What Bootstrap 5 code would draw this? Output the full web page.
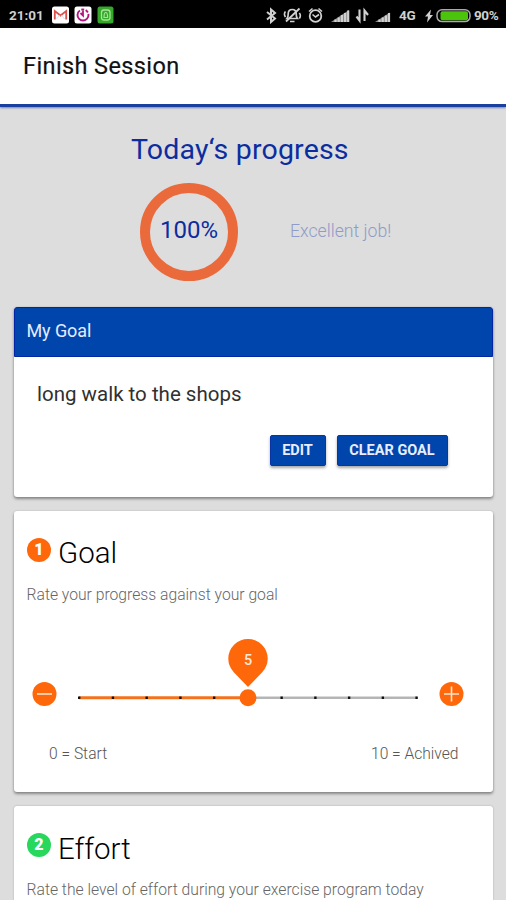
<!DOCTYPE html>
<html lang="en">
<head>
<meta charset="utf-8">
<meta name="viewport" content="width=device-width, initial-scale=1">
<title>Finish Session</title>
<link href="https://cdn.jsdelivr.net/npm/bootstrap@5.3.0/dist/css/bootstrap.min.css" rel="stylesheet">
<style>
  body { background: #dddddd; font-family: Roboto, "Liberation Sans", sans-serif; color: #000; }
  .statusbar { height: 28px; background: #000; color: #d0d0d0; font-size: 13.5px; font-weight: 700; line-height: 28px; padding: 1px 7px 0 9px; }
  .statusbar svg { display: block; flex: none; }
  .clock { width: 35px; white-space: nowrap; }
  .net { width: 17px; margin-left: 7px; letter-spacing: -.2px; }
  .pct { width: 25px; margin-left: 3px; letter-spacing: -.4px; }
  .appbar { height: 79px; background: #fff; border-bottom: 3px solid #1a3f9f; box-shadow: 0 1px 2px rgba(30,60,150,.55); }
  .appbar h1 { font-size: 23.5px; font-weight: 400; line-height: 30px; padding: 23px 0 0 23px; color: #111; letter-spacing: .4px; -webkit-text-stroke: .2px #111; }
  .today { height: 200px; color: #0b2da0; }
  .today h2 { font-size: 28.5px; font-weight: 400; line-height: 36px; padding: 25px 0 0 131px; letter-spacing: .18px; }
  .gauge-row { padding: 15px 0 0 140px; }
  .ring { width: 98px; height: 98px; border: 10px solid #ea6a3c; border-radius: 50%; font-size: 24px; line-height: 30px; padding-bottom: 5px; }
  .praise { font-size: 17.7px; font-weight: 300; color: #8f9cc8; margin: 0 0 2px 52px; }
  .panel { margin: 0 13.5px 14px 14px; border: 0; border-radius: 3px; box-shadow: 0 2px 3px rgba(0,0,0,.38), 0 0 2px rgba(0,0,0,.16); }
  .panel-goal { height: 190px; }
  .panel-head { height: 50px; background: #0045ab; border: 1px solid #0326a5; border-radius: 3px 3px 0 0; color: #e6ecff; font-size: 18px; line-height: 24px; padding: 10.5px 0 0 11.5px; letter-spacing: -.1px; }
  .goal-text { font-size: 20.5px; line-height: 28px; color: #303030; padding: 23px 0 0 23px; }
  .goal-actions { padding: 27px 45px 0 0; gap: 11px; }
  .btn-goal { --bs-btn-bg: #0045ab; --bs-btn-color: #e8edff; --bs-btn-border-color: #0b35a5; --bs-btn-border-radius: 2px; --bs-btn-padding-x: 0; --bs-btn-padding-y: 0; height: 31px; font-size: 14.5px; font-weight: 700; line-height: 28px; box-shadow: 0 2px 3px rgba(0,0,0,.35); }
  .btn-edit { width: 56px; }
  .btn-clear { width: 111px; }
  .panel-rate { height: 281px; }
  .panel-next { height: 94px; margin-bottom: 0; border-radius: 3px 3px 0 0; box-shadow: 0 0 2px rgba(0,0,0,.25); clip-path: inset(-4px -4px 0 -4px); }
  .step-title { padding: 24px 0 0 13px; gap: 7px; height: 60px; }
  .step-title h3 { font-size: 29.5px; font-weight: 300; line-height: 36px; }
  .panel-next .step-title { padding-top: 25px; height: 61px; }
  .step-no { width: 24px; height: 24px; border-radius: 50%; color: #fff; font-size: 16px; font-weight: 900; line-height: 24px; margin-top: 3px; }
  .panel-next .step-no { margin-top: 2px; }
  .bg-flame { background: #ff680a; }
  .bg-leaf { background: #27d85d; }
  .hint { font-size: 15.7px; font-weight: 300; line-height: 24px; color: #666; padding: 12px 0 0 12.5px; height: 35px; white-space: nowrap; }
  .panel-next .hint { padding-top: 11px; height: 33px; }
  .slider { height: 84px; margin-top: 32px; }
  .slider svg { display: block; }
  .scale { font-size: 15.6px; font-weight: 300; line-height: 20px; color: #555; padding: 22px 34px 0 35px; }
</style>
</head>
<body>
<div class="statusbar d-flex align-items-center">
  <span class="clock">21:01</span>
  <svg class="ms-2" width="62" height="18" viewBox="0 0 62 18">
    <rect x="0" y=".5" width="17" height="17" rx="2.5" fill="#fff"/>
    <path d="M2.800 13.500V5L8.500 9.500L14.200 5V13.500" fill="none" stroke="#d9534f" stroke-width="1.800"/>
    <path d="M4.500 13l3-4M12.500 13l-3-4" stroke="#ddd" stroke-width="1"/>
    <rect x="22.500" y=".5" width="17" height="17" rx="2.500" fill="#fff"/>
    <circle cx="31" cy="9" r="5.500" fill="none" stroke="#b5127d" stroke-width="1.900" stroke-dasharray="22 1.500 3 1.500 3 1.500"/>
    <path d="M31 4.500v5l-2.500-2.500" fill="none" stroke="#b5127d" stroke-width="1.800"/>
    <rect x="45.500" y=".5" width="16" height="17" rx="2.500" fill="#35a82b"/>
    <rect x="49.500" y="4" width="8.500" height="10" rx="2.500" fill="none" stroke="#a5e495" stroke-width="1.300"/>
    <path d="M52 11.500c0-4 .8-5 1.800-5s1.800 1 1.800 5z" fill="none" stroke="#a5e495" stroke-width="1.200"/>
  </svg>
  <svg class="ms-auto" width="127" height="18" viewBox="265 5 127 18" fill="none" stroke="#d0d0d0" stroke-width="1.600">
    <path d="M267 11l8 6.500-4 3.500V8.500l4 3.500-8 6.500" stroke-width="2"/>
    <path d="M287 17.500c1.200-1.300 1.200-2.700 1.200-4.500 0-3 1.800-4.500 4-4.500s4 1.500 4 4.500c0 1.800 0 3.200 1.200 4.500zM290 20.500h4.500" stroke-width="1.700"/>
    <path d="M299.500 7.500L286 20.500M285.500 10.500c-1.300 1.500-1.300 4 0 5.500M299.300 12c1.300 1.500 1.300 4 0 5.500" stroke-width="1.800"/>
    <circle cx="315.500" cy="15" r="5.800" stroke-width="1.800"/>
    <path d="M312.500 13.500l3 2.500 3.500-2.500M309 10.500l3.500-3M322 10.500l-3.500-3"/>
    <path d="M331 21l18-12v12z" fill="#8d8d8d" stroke="none"/>
    <path d="M335.500 21v-2.500M338.700 21v-4.500M341.900 21v-7M345.100 21v-9M348.200 21V9.500" stroke-width="2.200"/>
    <path d="M359.500 8.500v11l-3-4M364.500 20V9.500l3.500 4.500" stroke-width="2.100"/>
    <path d="M375 21l15-9.500V21z" fill="#8d8d8d" stroke="none"/>
    <path d="M379.500 21v-2.500M382.700 21v-4.500M385.900 21v-6.500M389 21v-9" stroke-width="2.200"/>
  </svg>
  <span class="net">4G</span>
  <svg class="ms-2" width="47" height="18" viewBox="423 5 47 18">
    <path d="M430 8.500l-6 7h3l-1 6 6-7.500h-3z" fill="#d0d0d0"/>
    <rect x="436" y="8.800" width="33" height="11.800" rx="5" fill="none" stroke="#aaa" stroke-width="1.500"/>
    <rect x="439.500" y="10.200" width="27.500" height="9" rx="2" fill="#4cc40b"/>
  </svg>
  <span class="pct">90%</span>
</div>

<header class="appbar">
  <h1 class="m-0">Finish Session</h1>
</header>

<section class="today">
  <h2 class="m-0">Today‘s progress</h2>
  <div class="gauge-row d-flex align-items-center">
    <div class="ring d-flex align-items-center justify-content-center">100%</div>
    <div class="praise">Excellent job!</div>
  </div>
</section>

<main>
  <section class="card panel panel-goal">
    <div class="panel-head">My Goal</div>
    <div class="goal-text">long walk to the shops</div>
    <div class="goal-actions d-flex justify-content-end">
      <button type="button" class="btn btn-goal btn-edit">EDIT</button>
      <button type="button" class="btn btn-goal btn-clear">CLEAR GOAL</button>
    </div>
  </section>

  <section class="card panel panel-rate">
    <div class="step-title d-flex">
      <span class="step-no bg-flame text-center">1</span>
      <h3 class="m-0">Goal</h3>
    </div>
    <div class="hint">Rate your progress against your goal</div>
    <div class="slider">
      <svg width="478" height="84" viewBox="14 638 478 84">
        <path d="M248 687L234 672.500A19.700 19.700 0 1 1 262 672.500Z" fill="#ff680a"/>
        <text x="248" y="664.500" text-anchor="middle" font-size="14.500" font-weight="500" fill="#ffe9da">5</text>
        <path d="M248 697.700H417" stroke="#b5b5b5" stroke-width="2.600"/>
        <path d="M79 697.700H248" stroke="#f4721c" stroke-width="3"/>
        <path d="M78 697.700H418" stroke="#111" stroke-width="2.400" stroke-dasharray="2.400 31.340"/>
        <circle cx="248" cy="697.700" r="8.500" fill="#ff680a"/>
        <circle cx="44.500" cy="694" r="12" fill="#ff680a"/>
        <path d="M37 694h15" stroke="#ffe3cf" stroke-width="1.600"/>
        <circle cx="451.500" cy="694" r="12" fill="#ff680a"/>
        <path d="M444 694h15M451.500 686.500v15" stroke="#ffe3cf" stroke-width="1.600"/>
      </svg>
    </div>
    <div class="scale d-flex justify-content-between">
      <span>0 = Start</span>
      <span>10 = Achived</span>
    </div>
  </section>

  <section class="card panel panel-next">
    <div class="step-title d-flex">
      <span class="step-no bg-leaf text-center">2</span>
      <h3 class="m-0">Effort</h3>
    </div>
    <div class="hint">Rate the level of effort during your exercise program today</div>
  </section>
</main>
<script src="https://cdn.jsdelivr.net/npm/bootstrap@5.3.0/dist/js/bootstrap.bundle.min.js"></script>
</body>
</html>
